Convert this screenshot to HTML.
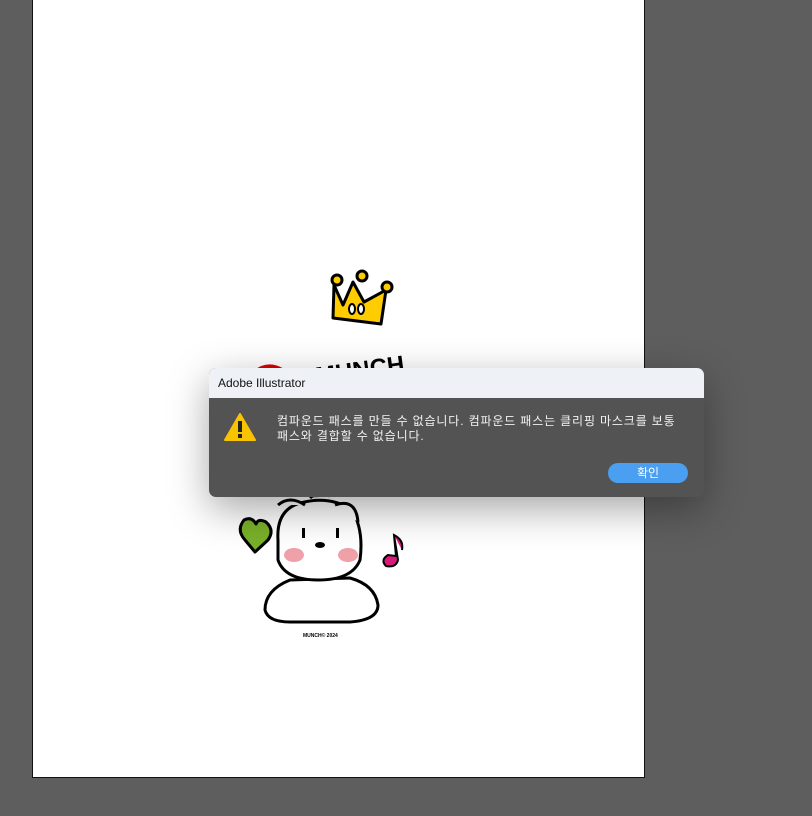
<!DOCTYPE html>
<html><head><meta charset="utf-8"><style>
body{margin:0;width:812px;height:816px;background:#5e5e5e;position:relative;overflow:hidden;font-family:"Liberation Sans","Noto Sans CJK KR",sans-serif}
.art{position:absolute;left:32px;top:-1px;width:611px;height:777px;background:#fff;border:1px solid #111}
.dlg{position:absolute;left:209px;top:368px;width:495px;height:129px;border-radius:7px;overflow:hidden;background:#535353;box-shadow:0 12px 40px rgba(0,0,0,.35)}
.tb{height:30px;background:#eef2f6;color:#111;font-size:12px;line-height:30px;padding-left:9px}
.msg{position:absolute;left:68px;top:46px;color:#f2f2f2;font-size:12px;line-height:15px;width:420px;letter-spacing:0.85px;white-space:nowrap}
.btn{position:absolute;left:399px;top:95px;width:80px;height:20px;border-radius:10px;background:#4a9ff0;color:#fff;font-size:12px;text-align:center;line-height:20px}
</style></head><body>
<div class="art"></div>
<svg style="position:absolute;left:0;top:0" width="812" height="816">
<g stroke="#000" stroke-width="3" stroke-linejoin="round">
<path d="M334 285 L343 305 L353 282 L364 302 L386 290 L381 324 L333 318 Z" fill="#fc0"/>
<circle cx="337" cy="280" r="5" fill="#fc0"/><circle cx="362" cy="276" r="5" fill="#fc0"/><circle cx="387" cy="287" r="5" fill="#fc0"/>
<ellipse cx="352" cy="309" rx="3" ry="5" fill="#fff" stroke-width="2"/><ellipse cx="361" cy="309" rx="3" ry="5" fill="#fff" stroke-width="2"/>
</g>
<text x="315" y="378" font-family="Liberation Sans" font-weight="bold" font-size="24" transform="rotate(-8 360 368)">MUNCH</text>
<path d="M255 372 Q268 362 282 370" stroke="#d00" stroke-width="4" fill="none"/>
<g stroke="#000" stroke-width="3" fill="#fff" stroke-linejoin="round">
<path d="M244 520 Q236 530 245 540 L255 552 L268 540 Q275 530 266 522 Q258 518 256 524 Q252 516 244 520Z" fill="#7ab02a"/>
<path d="M290 580 Q265 590 265 610 Q268 622 290 622 L350 622 Q378 620 378 605 Q375 585 350 578Z"/>
<path d="M278 540 Q276 510 300 503 Q330 495 352 510 Q364 530 360 560 Q352 580 318 580 Q285 580 278 560Z"/>
<path d="M278 505 Q290 495 305 505" />
<path d="M335 505 Q356 498 358 522"/>
</g>
<ellipse cx="294" cy="555" rx="10" ry="7" fill="#f0a0a8"/><ellipse cx="348" cy="555" rx="10" ry="7" fill="#f0a0a8"/>
<ellipse cx="320" cy="545" rx="5" ry="3"/>
<rect x="302" y="528" width="3" height="10"/><rect x="336" y="528" width="3" height="10"/>
<path d="M394 535 L398 560 Q396 568 386 566 Q380 560 388 555 L396 556 L394 535 Q404 540 402 550" stroke="#000" stroke-width="2" fill="#d81b7a"/>
<path d="M310 498 Q318 490 330 496" stroke="#000" stroke-width="3" fill="#7ab02a"/>
<text x="303" y="637" font-size="5" font-weight="bold" font-family="Liberation Sans">MUNCH© 2024</text>
</svg>
<div class="dlg">
<div class="tb">Adobe Illustrator</div>
<svg style="position:absolute;left:15px;top:44px" width="32" height="30"><path d="M16 2 L31 28 L1 28Z" fill="#f8c300" stroke="#f8c300" stroke-linejoin="round" stroke-width="2"/><rect x="14" y="9" width="4" height="11" fill="#222"/><rect x="14" y="22" width="4" height="4" fill="#222"/></svg>
<div class="msg">컴파운드 패스를 만들 수 없습니다. 컴파운드 패스는 클리핑 마스크를 보통<br>패스와 결합할 수 없습니다.</div>
<div class="btn">확인</div>
</div>
</body></html>
